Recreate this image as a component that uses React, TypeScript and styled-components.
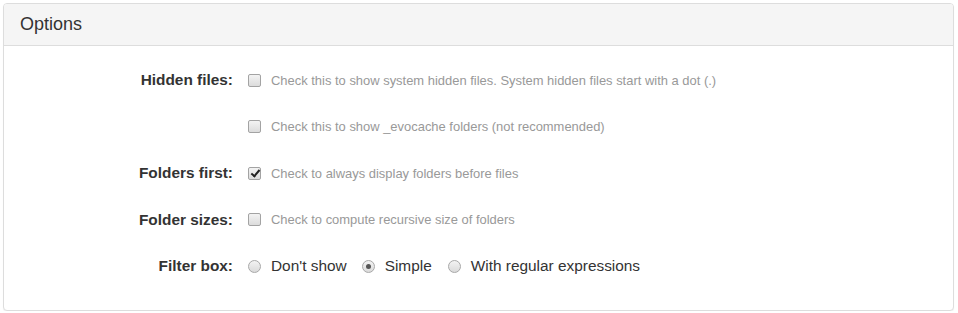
import React from 'react';
import styled, { createGlobalStyle } from 'styled-components';

const GlobalStyle = createGlobalStyle`
  html, body {
    margin: 0;
    padding: 0;
    background: #fff;
  }
  body {
    font-family: "Liberation Sans", Arial, Helvetica, sans-serif;
    color: #333;
  }
`;

const Page = styled.div`
  padding: 3px 4px 0 3px;
`;

const Panel = styled.section`
  border: 1px solid #ddd;
  border-radius: 4px;
  box-shadow: 0 1px 1px rgba(0, 0, 0, 0.05);
  background: #fff;
`;

const PanelHeading = styled.div`
  background: #f5f5f5;
  border-bottom: 1px solid #ddd;
  border-radius: 3px 3px 0 0;
  padding: 10px 16px;
  height: 21px;
`;

const PanelTitle = styled.h3`
  margin: 0;
  font-size: 18px;
  font-weight: 400;
  line-height: 21px;
  color: #333;
`;

const PanelBody = styled.div`
  padding: 11px 0 20px;
`;

const FormRow = styled.div`
  display: flex;
  align-items: center;
  height: 46.5px;
`;

const Label = styled.label`
  width: 229px;
  flex: none;
  text-align: right;
  font-size: 15.4px;
  font-weight: 700;
  color: #333;
`;

const Controls = styled.div`
  display: flex;
  align-items: center;
  margin-left: 15px;
`;

const Box = styled.input.attrs({ type: 'checkbox' })`
  appearance: none;
  margin: 0 10px 0 0;
  width: 13px;
  height: 13px;
  border: 1px solid #a3a3a3;
  border-radius: 2px;
  background: linear-gradient(#f3f3f3, #dcdcdc);
  position: relative;
  flex: none;
  box-sizing: border-box;
  &:checked::after {
    content: '';
    position: absolute;
    left: 3.5px;
    top: 0.5px;
    width: 3px;
    height: 7px;
    border: solid #222;
    border-width: 0 2px 2px 0;
    transform: rotate(40deg);
  }
`;

const Hint = styled.span`
  font-size: 12.95px;
  color: #999;
`;

const Radio = styled.input.attrs({ type: 'radio' })`
  appearance: none;
  margin: 0 10px 0 0;
  width: 13px;
  height: 13px;
  border: 1px solid #a8a8a8;
  border-radius: 50%;
  background: linear-gradient(#f3f3f3, #dadada);
  position: relative;
  flex: none;
  box-sizing: border-box;
  &:checked::after {
    content: '';
    position: absolute;
    left: 3px;
    top: 3px;
    width: 5px;
    height: 5px;
    border-radius: 50%;
    background: #555;
  }
`;

const RadioOption = styled.label<{ $gap?: number }>`
  display: flex;
  align-items: center;
  font-size: 15.4px;
  color: #333;
  margin-right: ${p => p.$gap ?? 15}px;
`;

const checkRows = [
  { label: 'Hidden files:', hint: 'Check this to show system hidden files. System hidden files start with a dot (.)', checked: false },
  { label: '', hint: 'Check this to show _evocache folders (not recommended)', checked: false },
  { label: 'Folders first:', hint: 'Check to always display folders before files', checked: true },
  { label: 'Folder sizes:', hint: 'Check to compute recursive size of folders', checked: false },
];

export default function App() {
  return (
    <Page>
      <GlobalStyle />
      <Panel>
        <PanelHeading>
          <PanelTitle>Options</PanelTitle>
        </PanelHeading>
        <PanelBody>
          {checkRows.map((r, i) => (
            <FormRow key={i}>
              <Label>{r.label}</Label>
              <Controls>
                <Box defaultChecked={r.checked} />
                <Hint>{r.hint}</Hint>
              </Controls>
            </FormRow>
          ))}
          <FormRow>
            <Label>Filter box:</Label>
            <Controls>
              <RadioOption>
                <Radio name="filter" />
                Don't show
              </RadioOption>
              <RadioOption $gap={16}>
                <Radio name="filter" defaultChecked />
                Simple
              </RadioOption>
              <RadioOption>
                <Radio name="filter" />
                With regular expressions
              </RadioOption>
            </Controls>
          </FormRow>
        </PanelBody>
      </Panel>
    </Page>
  );
}
